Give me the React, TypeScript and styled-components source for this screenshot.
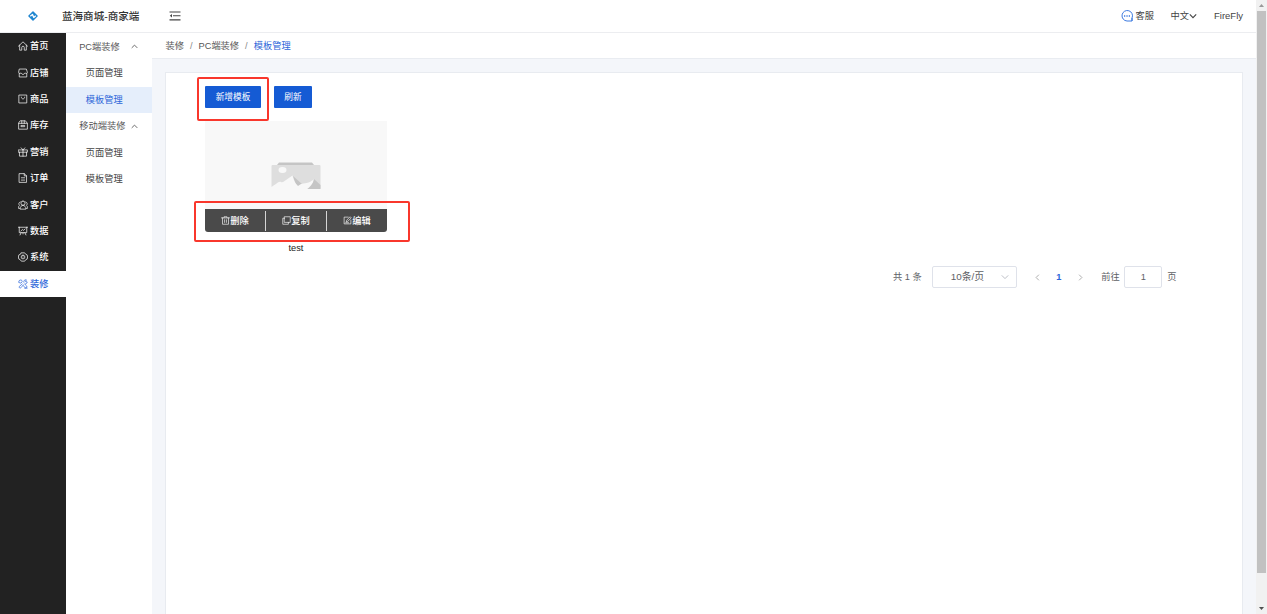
import React from 'react';
import styled, { createGlobalStyle } from 'styled-components';

const GlobalStyle = createGlobalStyle`
  * { box-sizing: border-box; }
  html, body { margin: 0; overflow: hidden; }
  body {
    font-family: "Liberation Sans", "Noto Sans CJK SC", sans-serif;
    font-size: 9.24px;
    color: #555;
    background: #fff;
  }
  button { font-family: inherit; }
  svg { flex: none; }
`;

const Shell = styled.div`
  display: flex;
  width: 1267px;
  height: 614px;
  overflow: hidden;
`;

const Page = styled.div`
  display: flex;
  flex-direction: column;
  width: 1256px;
  height: 100%;
`;

const Header = styled.header`
  display: flex;
  align-items: center;
  height: 33px;
  flex: none;
  background: #fff;
  border-bottom: 1px solid #ecedf0;
`;

const LogoBox = styled.div`
  display: flex;
  justify-content: center;
  width: 62px;
  padding-left: 4px;
`;

const Title = styled.h1`
  margin: 0;
  width: 107px;
  font-size: 10.56px;
  font-weight: 500;
  line-height: 16px;
  color: #333;
  white-space: nowrap;
`;

const HeaderRight = styled.div`
  display: flex;
  align-items: center;
  margin-left: auto;
  padding-right: 13px;
  line-height: 14px;
  color: #444;
`;

const HeaderItem = styled.div<{ $gap: number }>`
  display: flex;
  align-items: center;
  gap: 3px;
  margin-left: ${(p) => p.$gap}px;
  white-space: nowrap;
`;

const Language = styled(HeaderItem)`
  gap: 0;
`;

const UserName = styled(HeaderItem)`
  font-size: 9.5px;
`;

const Body = styled.div`
  display: flex;
  flex: 1;
  min-height: 0;
`;

const Sidebar = styled.nav`
  width: 66px;
  flex: none;
  background: #222;
`;

const NavItem = styled.a<{ $active?: boolean }>`
  display: flex;
  align-items: center;
  gap: 2px;
  height: 26.4px;
  padding-left: 18px;
  font-weight: 500;
  line-height: 14px;
  color: ${(p) => (p.$active ? '#2c66d9' : '#fff')};
  background: ${(p) => (p.$active ? '#fff' : 'transparent')};
`;

const SubMenu = styled.nav`
  width: 86px;
  flex: none;
  padding-top: 0.8px;
  background: #fff;
`;

const SubGroup = styled.div`
  display: flex;
  align-items: center;
  justify-content: space-between;
  height: 26.4px;
  padding: 0 14.5px 0 13.2px;
  line-height: 14px;
  white-space: nowrap;
`;

const SubItem = styled.a<{ $active?: boolean }>`
  display: flex;
  align-items: center;
  height: 26.4px;
  padding-left: 19.8px;
  line-height: 14px;
  color: ${(p) => (p.$active ? '#2c66d9' : '#444')};
  background: ${(p) => (p.$active ? '#e5eefb' : 'transparent')};
`;

const Main = styled.main`
  display: flex;
  flex-direction: column;
  flex: 1;
  background: #f4f6fa;
`;

const Breadcrumb = styled.div`
  display: flex;
  align-items: center;
  height: 26px;
  flex: none;
  padding-left: 13.5px;
  background: #fff;
  border-bottom: 1px solid #e9ecf1;
  line-height: 14px;
`;

const Slash = styled.span`
  margin: 0 6px;
  color: #888;
`;

const Current = styled.span`
  color: #2c66d9;
`;

const Panel = styled.section`
  flex: 1;
  margin: 13px 13px 0 13px;
  padding: 13px 65.5px 0 39px;
  background: #fff;
  border: 1px solid #e8ebf0;
  border-bottom: 0;
`;

const Toolbar = styled.div`
  display: flex;
  gap: 13px;
`;

const Button = styled.button<{ $width: number }>`
  display: block;
  width: ${(p) => p.$width}px;
  height: 22px;
  padding: 0;
  border: 0;
  border-radius: 1px;
  background: #155bd4;
  color: #fff;
  font-size: 8.7px;
  line-height: 22px;
  white-space: nowrap;
`;

const Marked = styled.div`
  position: relative;
`;

const Mark = styled.span<{ $inset: string }>`
  position: absolute;
  inset: ${(p) => p.$inset};
  border: 2px solid #f9372c;
  border-radius: 2px;
  pointer-events: none;
`;

const Template = styled.article`
  width: 182px;
  margin-top: 13px;
`;

const Preview = styled.div`
  display: flex;
  justify-content: center;
  height: 88px;
  padding-top: 41px;
  background: #f8f8f8;
`;

const Actions = styled.div`
  position: relative;
  display: flex;
  align-items: center;
  height: 23px;
  background: #4a4a4a;
  border-radius: 0 0 3px 3px;
`;

const Action = styled.a`
  display: flex;
  align-items: center;
  justify-content: center;
  flex: 1;
  height: 20px;
  font-weight: 500;
  line-height: 20px;
  color: #fff;
  & + & { border-left: 1px solid #d5d5d5; }
`;

const Name = styled.div`
  margin-top: 9px;
  text-align: center;
  line-height: 14px;
  color: #222;
`;

const Pagination = styled.div`
  display: flex;
  align-items: center;
  justify-content: flex-end;
  margin-top: 11px;
  height: 22px;
  font-size: 9.24px;
  line-height: 14px;
  color: #606266;
`;

const Select = styled.div`
  display: flex;
  align-items: center;
  justify-content: space-between;
  width: 85px;
  height: 22px;
  margin: 0 17px 0 10px;
  padding: 0 7px 0 18px;
  border: 1px solid #dfe2ea;
  border-radius: 2px;
  font-size: 9.9px;
`;

const PageNumber = styled.b`
  width: 36px;
  text-align: center;
  color: #2c66d9;
`;

const JumpLabel = styled.span`
  margin-left: 17.5px;
`;

const JumpBox = styled.div`
  width: 38px;
  height: 22px;
  margin: 0 5px 0 4.5px;
  border: 1px solid #dfe2ea;
  border-radius: 2px;
  text-align: center;
  line-height: 20px;
`;

const ScrollTrack = styled.div`
  display: flex;
  flex-direction: column;
  align-items: center;
  width: 11px;
  height: 100%;
  padding: 4px 0;
  background: #f1f1f1;
`;

const ScrollThumb = styled.div`
  width: 9px;
  height: 562px;
  margin: 4px 0 auto;
  background: #c1c1c1;
`;

const Icon = ({ size = 10, stroke = 1.7, children }: { size?: number; stroke?: number; children: React.ReactNode }) => (
  <svg width={size} height={size} viewBox="0 0 24 24" fill="none" stroke="currentColor" strokeWidth={stroke} strokeLinejoin="round" strokeLinecap="round">
    {children}
  </svg>
);

const Chevron = ({ d, size = 7, color = '#666', width = 1.1 }: { d: string; size?: number; color?: string; width?: number }) => (
  <svg width={size} height={size} viewBox="0 0 8 8" fill="none" stroke={color} strokeWidth={width}>
    <path d={d} />
  </svg>
);

const UP = 'M.8 5.6 4 2.4l3.2 3.2';
const DOWN = 'M.8 2.4 4 5.6l3.2-3.2';
const LEFT = 'M5.6.8 2.4 4l3.2 3.2';
const RIGHT = 'M2.4.8 5.6 4 2.4 7.2';

const NAV = [
  { label: '首页', icon: <path d="M1 12.500 12 2l11 10.500M4 10v12h5v-6.500a3 3 0 0 1 6 0V22h5V10" /> },
  { label: '店铺', icon: <path d="M4 2.500h16l2.500 8c0 2-2 3-4 2H16l-2 2.500h-4L8 12.500H5c-2 1-3.500 0-3.500-2zM3 13v8.500h18V13" /> },
  { label: '商品', icon: <path d="M3 2.500h18v19H3zM8 7.500c0 6 8 6 8 0" /> },
  { label: '库存', icon: <path d="M6 2h12l4.500 6v14h-21V8zM2 8h20M9 2v6M15 2v6M8 13h8v3H8z" /> },
  { label: '营销', icon: <path d="M1.500 7h21v5.500h-21zM3.500 12.500V22h17v-9.500M12 7v15M12 7 7.500 2M12 7l4.500-5" /> },
  { label: '订单', icon: <path d="M3.500 1.500H15L20.500 7v15.500h-17zM15 1.500V7h5.500M8 11.500h8M8 17h8" /> },
  { label: '客户', icon: <path d="M12 2.500a5 5 0 1 1 0 10 5 5 0 0 1 0-10M5 21c0-11 14-11 14 0zM5.500 4.500C1 6 1 11 4 12.500 1.500 14 1 17 1 20h3M18.500 4.500C23 6 23 11 20 12.500c2.500 1.500 3 4.500 3 7.500h-3" /> },
  { label: '数据', icon: <path d="M1 3h22M3 3v13h18V3M7.500 16 5 21.500M16.500 16l2.500 5.500M12 16v3M7 12l3.500-3.500 3 2L17 7" /> },
  { label: '系统', icon: <path d="M8 2h8l2.500 3.500L22 7l1 5-1 5-3.500 1.500L16 22H8l-2.500-3.500L2 17l-1-5 1-5 3.500-1.500zM12 7.500a4.500 4.500 0 1 1 0 9 4.500 4.500 0 0 1 0-9M12 11.500v1" /> },
  { label: '装修', icon: <path d="M3 3.500c2-3 8-1 7 3L7 10 2.500 8.500zM14 8c-1-4 2-7 6-6l-2 4 4 1c0 4-3 5-6 5l5 5c2 3-2 6-4 4l-4-5M10 12l-7 6c-1 3 2 5 4 3l6-7M16 22h6" /> },
];

export default function App() {
  return (
    <>
      <GlobalStyle />
      <Shell>
        <Page>
          <Header>
            <LogoBox>
              <svg width="10" height="10" viewBox="0 0 20 20" strokeLinejoin="round">
                <path d="M10 2 18 10 10 18 2 10z" fill="#1f86d0" stroke="#1f86d0" strokeWidth="3" />
                <path d="M4.500 10.500 9 7l2.500 6 4-3.500" fill="none" stroke="#fff" strokeWidth="2.600" />
              </svg>
            </LogoBox>
            <Title>蓝海商城-商家端</Title>
            <svg width="12" height="10" viewBox="0 0 12 10" fill="none" stroke="#444" strokeWidth="1.1">
              <path d="M.5 1h11M4 4.800h7.500M.5 8.900h11" />
              <path d="M3 3 .8 4.800 3 6.600z" fill="#444" stroke="none" />
            </svg>
            <HeaderRight>
              <HeaderItem $gap={0}>
                <svg width="12" height="12" viewBox="0 0 24 24" fill="none" stroke="#3d7be0" strokeWidth="2">
                  <path d="M22 22h-10A10.500 10.500 0 1 1 22 16zM22 22v-6" />
                  <path d="M6 12h2.500M10.800 12h2.500M15.500 12H18" strokeWidth="2.600" />
                </svg>
                客服
              </HeaderItem>
              <Language $gap={16.5}>
                中文
                <Chevron d={DOWN} size={8} color="#444" />
              </Language>
              <UserName $gap={17}>FireFly</UserName>
            </HeaderRight>
          </Header>
          <Body>
            <Sidebar>
              {NAV.map((n) => (
                <NavItem key={n.label} $active={n.label === '装修'}>
                  <Icon>{n.icon}</Icon>
                  {n.label}
                </NavItem>
              ))}
            </Sidebar>
            <SubMenu>
              <SubGroup>PC端装修<Chevron d={UP} /></SubGroup>
              <SubItem>页面管理</SubItem>
              <SubItem $active>模板管理</SubItem>
              <SubGroup>移动端装修<Chevron d={UP} /></SubGroup>
              <SubItem>页面管理</SubItem>
              <SubItem>模板管理</SubItem>
            </SubMenu>
            <Main>
              <Breadcrumb>
                装修<Slash>/</Slash>PC端装修<Slash>/</Slash>
                <Current>模板管理</Current>
              </Breadcrumb>
              <Panel>
                <Toolbar>
                  <Marked>
                    <Button $width={56}>新增模板</Button>
                    <Mark $inset="-9px -8px -13px -8px" />
                  </Marked>
                  <Button $width={38}>刷新</Button>
                </Toolbar>
                <Template>
                  <Preview>
                    <svg width="50" height="28" viewBox="0 0 50 28">
                      <path d="M6 3 8 .5h33L43 3z" fill="#c5c5c5" />
                      <rect x=".5" y="3" width="49" height="24" rx="1" fill="#dedede" />
                      <ellipse cx="11.500" cy="8" rx="4" ry="3" fill="#f8f8f8" />
                      <path d="m22 14 9 8-5 4z" fill="#c5c5c5" />
                      <path d="m43 17 6.500 6v4H34z" fill="#c5c5c5" />
                      <path d="M0 25c5-2 7-6 10-5 2 1 3-1 5-2l6.500-4.500c1 4 2 7 5.500 10.500l3-2c3-1 8 0 13-5-1 5-4 8-8 11H0z" fill="#f8f8f8" />
                    </svg>
                  </Preview>
                  <Actions>
                    <Action>
                      <Icon size={9}><path d="M1 5h22M8 5V2h8v3M4 5v17h16V5M9.500 10v7M14.500 10v7" /></Icon>删除
                    </Action>
                    <Action>
                      <Icon size={9}><path d="M7 2h15v15H7zM7 6H2v16h15v-5" /></Icon>复制
                    </Action>
                    <Action>
                      <Icon size={9}><path d="M14 3H3v18h18V11M9 15l1-4 9-9 3 3-9 9zM7 18h8" /></Icon>编辑
                    </Action>
                    <Mark $inset="-8px -23px -10px -11px" />
                  </Actions>
                  <Name>test</Name>
                </Template>
                <Pagination>
                  共 1 条
                  <Select>10条/页<Chevron d={DOWN} size={8} color="#b4b8c0" width={0.9} /></Select>
                  <Chevron d={LEFT} color="#999" width={0.9} />
                  <PageNumber>1</PageNumber>
                  <Chevron d={RIGHT} color="#999" width={0.9} />
                  <JumpLabel>前往</JumpLabel>
                  <JumpBox>1</JumpBox>
                  页
                </Pagination>
              </Panel>
            </Main>
          </Body>
        </Page>
        <ScrollTrack>
          <svg width="5" height="3" viewBox="0 0 5 3"><path d="M0 3 2.500 0 5 3z" fill="#999" /></svg>
          <ScrollThumb />
          <svg width="5" height="3" viewBox="0 0 5 3"><path d="M0 0 2.500 3 5 0z" fill="#505050" /></svg>
        </ScrollTrack>
      </Shell>
    </>
  );
}
